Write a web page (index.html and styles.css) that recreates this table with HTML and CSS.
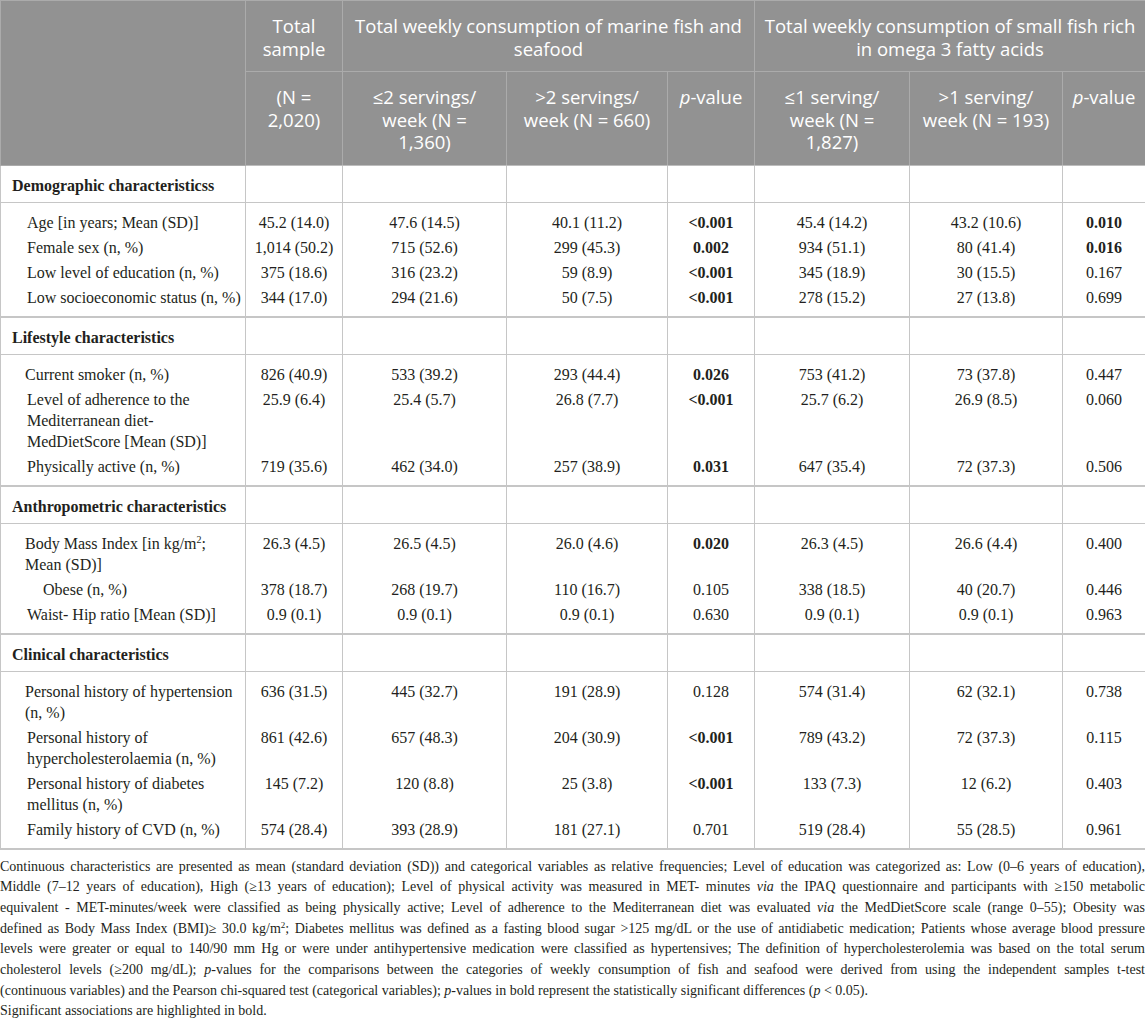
FILE: index.html
```html
<!DOCTYPE html>
<html lang="en">
<head>
<meta charset="utf-8">
<title>Table</title>
<link rel="stylesheet" href="styles.css">
</head>
<body>
<table class="data">
  <colgroup>
    <col class="c-label"><col class="c-total"><col class="c-a1"><col class="c-a2"><col class="c-ap"><col class="c-b1"><col class="c-b2"><col class="c-bp">
  </colgroup>
  <thead>
    <tr class="h1">
      <th rowspan="2"></th>
      <th>Total<br>sample</th>
      <th colspan="3">Total weekly consumption of marine fish and<br>seafood</th>
      <th colspan="3">Total weekly consumption of small fish rich<br>in omega 3 fatty acids</th>
    </tr>
    <tr class="h2">
      <th>(N =<br>2,020)</th>
      <th>≤2 servings/<br>week (N =<br>1,360)</th>
      <th>&gt;2 servings/<br>week (N = 660)</th>
      <th><i>p</i>-value</th>
      <th>≤1 serving/<br>week (N =<br>1,827)</th>
      <th>&gt;1 serving/<br>week (N = 193)</th>
      <th><i>p</i>-value</th>
    </tr>
  </thead>
  <tbody>
    <tr class="sec"><td>Demographic characteristicss</td><td></td><td></td><td></td><td></td><td></td><td></td><td></td></tr>
    <tr class="first"><td class="lbl">Age [in years; Mean (SD)]</td><td>45.2 (14.0)</td><td>47.6 (14.5)</td><td>40.1 (11.2)</td><td class="b">&lt;0.001</td><td>45.4 (14.2)</td><td>43.2 (10.6)</td><td class="b">0.010</td></tr>
    <tr><td class="lbl">Female sex (n, %)</td><td>1,014 (50.2)</td><td>715 (52.6)</td><td>299 (45.3)</td><td class="b">0.002</td><td>934 (51.1)</td><td>80 (41.4)</td><td class="b">0.016</td></tr>
    <tr><td class="lbl">Low level of education (n, %)</td><td>375 (18.6)</td><td>316 (23.2)</td><td>59 (8.9)</td><td class="b">&lt;0.001</td><td>345 (18.9)</td><td>30 (15.5)</td><td>0.167</td></tr>
    <tr class="last"><td class="lbl">Low socioeconomic status (n, %)</td><td>344 (17.0)</td><td>294 (21.6)</td><td>50 (7.5)</td><td class="b">&lt;0.001</td><td>278 (15.2)</td><td>27 (13.8)</td><td>0.699</td></tr>

    <tr class="sec"><td>Lifestyle characteristics</td><td></td><td></td><td></td><td></td><td></td><td></td><td></td></tr>
    <tr class="first"><td class="lbl lbl-s">Current smoker (n, %)</td><td>826 (40.9)</td><td>533 (39.2)</td><td>293 (44.4)</td><td class="b">0.026</td><td>753 (41.2)</td><td>73 (37.8)</td><td>0.447</td></tr>
    <tr><td class="lbl">Level of adherence to the<br>Mediterranean diet-<br>MedDietScore [Mean (SD)]</td><td>25.9 (6.4)</td><td>25.4 (5.7)</td><td>26.8 (7.7)</td><td class="b">&lt;0.001</td><td>25.7 (6.2)</td><td>26.9 (8.5)</td><td>0.060</td></tr>
    <tr class="last"><td class="lbl">Physically active (n, %)</td><td>719 (35.6)</td><td>462 (34.0)</td><td>257 (38.9)</td><td class="b">0.031</td><td>647 (35.4)</td><td>72 (37.3)</td><td>0.506</td></tr>

    <tr class="sec"><td>Anthropometric characteristics</td><td></td><td></td><td></td><td></td><td></td><td></td><td></td></tr>
    <tr class="first"><td class="lbl lbl-s">Body Mass Index [in kg/m<sup>2</sup>;<br>Mean (SD)]</td><td>26.3 (4.5)</td><td>26.5 (4.5)</td><td>26.0 (4.6)</td><td class="b">0.020</td><td>26.3 (4.5)</td><td>26.6 (4.4)</td><td>0.400</td></tr>
    <tr><td class="lbl lbl-sub">Obese (n, %)</td><td>378 (18.7)</td><td>268 (19.7)</td><td>110 (16.7)</td><td>0.105</td><td>338 (18.5)</td><td>40 (20.7)</td><td>0.446</td></tr>
    <tr class="last"><td class="lbl">Waist- Hip ratio [Mean (SD)]</td><td>0.9 (0.1)</td><td>0.9 (0.1)</td><td>0.9 (0.1)</td><td>0.630</td><td>0.9 (0.1)</td><td>0.9 (0.1)</td><td>0.963</td></tr>

    <tr class="sec"><td>Clinical characteristics</td><td></td><td></td><td></td><td></td><td></td><td></td><td></td></tr>
    <tr class="first"><td class="lbl lbl-s">Personal history of hypertension<br>(n, %)</td><td>636 (31.5)</td><td>445 (32.7)</td><td>191 (28.9)</td><td>0.128</td><td>574 (31.4)</td><td>62 (32.1)</td><td>0.738</td></tr>
    <tr><td class="lbl">Personal history of<br>hypercholesterolaemia (n, %)</td><td>861 (42.6)</td><td>657 (48.3)</td><td>204 (30.9)</td><td class="b">&lt;0.001</td><td>789 (43.2)</td><td>72 (37.3)</td><td>0.115</td></tr>
    <tr><td class="lbl">Personal history of diabetes<br>mellitus (n, %)</td><td>145 (7.2)</td><td>120 (8.8)</td><td>25 (3.8)</td><td class="b">&lt;0.001</td><td>133 (7.3)</td><td>12 (6.2)</td><td>0.403</td></tr>
    <tr class="last"><td class="lbl">Family history of CVD (n, %)</td><td>574 (28.4)</td><td>393 (28.9)</td><td>181 (27.1)</td><td>0.701</td><td>519 (28.4)</td><td>55 (28.5)</td><td>0.961</td></tr>
  </tbody>
</table>
<div class="notes">
  <p class="para">
    <span class="ln">Continuous characteristics are presented as mean (standard deviation (SD)) and categorical variables as relative frequencies; Level of education was categorized as: Low (0–6 years of education),</span>
    <span class="ln">Middle (7–12 years of education), High (≥13 years of education); Level of physical activity was measured in MET- minutes <i>via</i> the IPAQ questionnaire and participants with ≥150 metabolic</span>
    <span class="ln">equivalent - MET-minutes/week were classified as being physically active; Level of adherence to the Mediterranean diet was evaluated <i>via</i> the MedDietScore scale (range 0–55); Obesity was</span>
    <span class="ln">defined as Body Mass Index (BMI)≥ 30.0 kg/m<sup>2</sup>; Diabetes mellitus was defined as a fasting blood sugar &gt;125 mg/dL or the use of antidiabetic medication; Patients whose average blood pressure</span>
    <span class="ln">levels were greater or equal to 140/90 mm Hg or were under antihypertensive medication were classified as hypertensives; The definition of hypercholesterolemia was based on the total serum</span>
    <span class="ln">cholesterol levels (≥200 mg/dL); <i>p</i>-values for the comparisons between the categories of weekly consumption of fish and seafood were derived from using the independent samples t-test</span>
    <span class="ln end">(continuous variables) and the Pearson chi-squared test (categorical variables); <i>p</i>-values in bold represent the statistically significant differences (<i>p</i> &lt; 0.05).</span>
  </p>
  <p class="para"><span class="ln end">Significant associations are highlighted in bold.</span></p>
</div>
</body>
</html>
```
FILE: styles.css
```css
html, body {
  margin: 0;
  padding: 0;
  background: #ffffff;
}

body {
  width: 1145px;
  font-family: "Liberation Serif", "Times New Roman", serif;
  color: #231f20;
}

.data {
  width: 1145px;
  border-collapse: collapse;
  table-layout: fixed;
}

.c-label { width: 245px; }
.c-total { width: 97px; }
.c-a1 { width: 164px; }
.c-a2 { width: 161px; }
.c-ap { width: 87px; }
.c-b1 { width: 155px; }
.c-b2 { width: 153px; }
.c-bp { width: 83px; }

.data th {
  background: #929292;
  color: #ffffff;
  font-family: "Open Sans", "Noto Sans", sans-serif;
  font-weight: 400;
  font-size: 18.5px;
  line-height: 22.5px;
  text-align: center;
  vertical-align: top;
  white-space: nowrap;
  border: 1px solid #ababab;
}

.data th i {
  font-style: italic;
}

.data .h1 th {
  padding: 14px 2px 11px;
}

.data .h2 th {
  padding: 14px 2px 11px;
  border-bottom: 1px solid #bdbdbd;
}

.data td {
  font-size: 16px;
  line-height: 21px;
  padding: 2px 6px;
  text-align: center;
  vertical-align: top;
  white-space: nowrap;
  border-left: 1px solid #c6c6c6;
  border-right: 1px solid #c6c6c6;
}

.data td.lbl {
  text-align: left;
  padding-left: 26px;
}

.data td.lbl-s {
  padding-left: 24px;
}

.data td.lbl-sub {
  padding-left: 42px;
}

.data td.b {
  font-weight: 700;
}

.data sup {
  font-size: 10px;
  line-height: 0;
  vertical-align: 6px;
}

.data .sec td {
  font-weight: 700;
  text-align: left;
  padding: 9px 11px 6px;
  border-bottom: 1px solid #c6c6c6;
}

.data .first td {
  padding-top: 9px;
}

.data .last td {
  padding-bottom: 8px;
  border-bottom: 2px solid #c6c6c6;
}

.notes {
  padding: 7px 0 0;
  font-size: 14px;
  line-height: 20.7px;
  color: #231f20;
}

.para {
  margin: 0;
}

.ln {
  display: block;
  white-space: nowrap;
  text-align: justify;
  text-align-last: justify;
}

.ln.end {
  text-align-last: left;
}

.notes sup {
  font-size: 9px;
  line-height: 0;
  vertical-align: 5px;
}
```
